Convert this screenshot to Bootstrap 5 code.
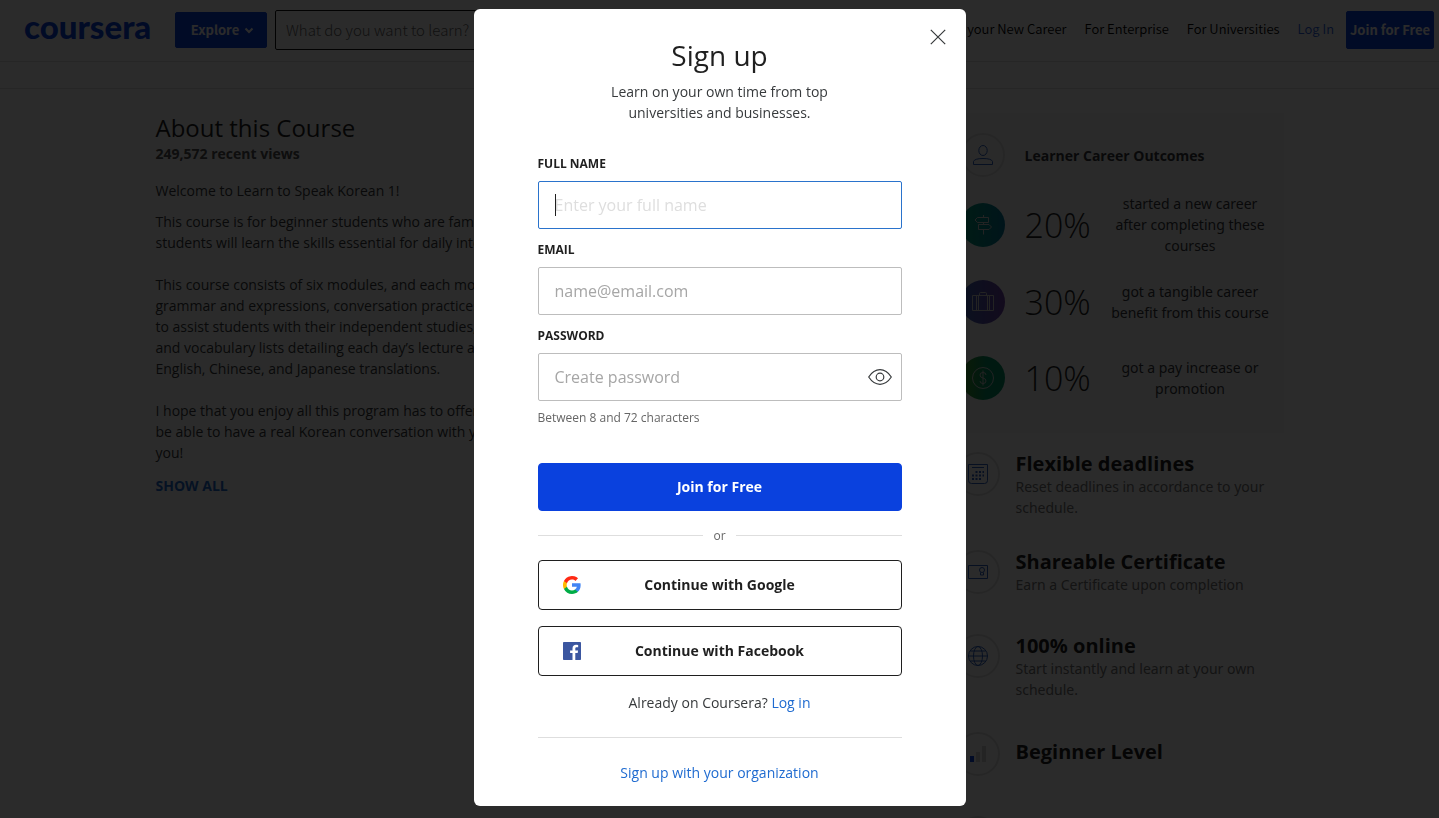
<!DOCTYPE html>
<html lang="en">
<head>
<meta charset="utf-8">
<meta name="viewport" content="width=device-width, initial-scale=1">
<title>Sign up | Coursera</title>
<link href="https://cdn.jsdelivr.net/npm/bootstrap@5.3.0/dist/css/bootstrap.min.css" rel="stylesheet">
<style>
  :root { --brand: #0a41de; --link: #1f6bd0; --ink: #1f1f1f; }
  body { font-family: "Open Sans", "Noto Sans", sans-serif; font-size: 14px; line-height: 21px; color: #373a3c; overflow: hidden; height: 100vh; }
  a { text-decoration: none; color: var(--link); }

  /* site header */
  .site-header { height: 62px; padding: 0 5px 2px 24px; border-bottom: 1px solid #e1e1e1; font-family: "Noto Sans CJK SC", sans-serif; }
  .brand-name { font-family: Lato, sans-serif; font-weight: 900; font-size: 33px; line-height: 36px; color: var(--brand); width: 151px; }
  .btn-explore { width: 92px; height: 36px; }
  .btn-brand { --bs-btn-bg: var(--brand); --bs-btn-border-color: var(--brand); --bs-btn-color: #fff; --bs-btn-hover-bg: #0837bd; --bs-btn-hover-color: #fff; --bs-btn-border-radius: 2px; --bs-btn-padding-x: 0; --bs-btn-padding-y: 0; font-weight: 700; font-size: 13px; white-space: nowrap; }
  .btn-join-top { width: 88px; height: 38px; margin-left: 12px; }
  .search-box { width: 360px; height: 40px; border: 1px solid #111; border-radius: 2px; font-size: 15px; font-weight: 300; padding: 0 10px; }
  .search-box::placeholder { color: #666; opacity: 1; }
  .top-links { font-size: 13px; font-weight: 350; gap: 18px; padding-bottom: 2px; white-space: nowrap; }
  .top-links a { color: #000; }
  .top-links .login-link { color: #2a5fe0; }
  .sub-bar { height: 27px; border-bottom: 1px solid #e1e1e1; }

  /* course page */
  .course { max-width: 1128px; margin: 24px auto 0; }
  .course-text { max-width: 720px; }
  .course-text h2 { font-size: 24px; line-height: 30px; color: var(--ink); }
  .views { font-weight: 700; color: #525252; margin-bottom: 16px; }
  .course-text .about { margin-bottom: 21px; }
  .course-text .about-first { margin-top: 10px; }
  .course-text .about-last { margin-bottom: 12px; }
  .show-all { font-weight: 700; }
  .course-side { width: 340px; font-family: "Noto Sans", "Open Sans", sans-serif; }
  .outcomes { background: #f9f9f9; border: 1px solid #f5f5f5; padding: 19px 13px 24px 16px; gap: 16px; }
  .ring { width: 44px; height: 44px; border-radius: 50%; border: 2px solid #e1e1e1; flex: none; display: grid; place-items: center; }
  .ring.filled { border: 0; }
  .teal { background: linear-gradient(90deg, #00a37a, #00789c); }
  .violet { background: linear-gradient(90deg, #3a62b8, #7040a8); }
  .green { background: linear-gradient(90deg, #389a30 10%, #009468 60%); }
  .outcome { min-height: 60px; gap: 20px; }
  .percent, .course-side strong, .course-side h3 { font-family: "Open Sans", sans-serif; }
  .percent { font-size: 34px; line-height: 44px; font-weight: 300; color: var(--ink); width: 66px; flex: none; }
  .outcome-text { flex: 1; margin: 0 -4px; text-align: center; }
  .features { padding: 19px 0 0 12px; gap: 32px; }
  .feature { min-height: 52px; gap: 16px; color: #757575; }
  .feature h3 { font-size: 20px; line-height: 24px; font-weight: 700; color: var(--ink); margin: 0; }
  .single { padding-top: 8px; }

  /* sign-up dialog */
  .modal-backdrop.show { opacity: .83; }
  .signup { --bs-modal-width: 492px; --bs-modal-border-radius: 6px; }
  .signup .modal-dialog { margin: 9px auto; }
  .signup .modal-content { border: 0; padding: 28px 64px 23px; }
  .signup h1 { font-size: 28px; line-height: 36px; font-weight: 400; color: var(--ink); }
  .intro { max-width: 240px; }
  .signup label { display: block; font-size: 12px; line-height: 18px; font-weight: 700; color: var(--ink); text-transform: uppercase; margin-bottom: 8px; }
  .signup .form-control { height: 48px; padding: 0 16px; font-size: 16px; border: 1px solid #bdbdbd; border-radius: 2px; }
  .signup .form-control::placeholder { color: #a6a6a6; opacity: 1; }
  .signup .form-control:focus { border-color: #2a73cc; box-shadow: none; caret-color: transparent; }
  .signup .form-control:focus::placeholder { color: #dedede; }
  .text-cursor { display: none; position: absolute; left: 17px; bottom: 13px; width: 1px; height: 22px; background: var(--ink); }
  .form-control:focus:placeholder-shown + .text-cursor { display: block; }
  .signup .form-control:focus:not(:placeholder-shown) { caret-color: var(--ink); }
  .note { font-size: 12px; line-height: 18px; color: #666; }
  .signup-form { margin-top: 32px; gap: 12px; }
  .btn-tall { height: 48px; font-size: 14px; padding-bottom: 2px; --bs-btn-border-radius: 4px; }
  .btn-submit { margin-top: 36px; }
  .divider { gap: 10px; margin: 16px 0 15px; }
  .signup hr { border-color: #dedede; opacity: 1; }
  .divider hr { margin: 0 0 1px; }
  .btn-social { height: 50px; font-size: 14px; font-weight: 700; padding: 0 0 2px; border: 1px solid var(--ink); color: var(--ink); --bs-btn-border-radius: 4px; }
  .btn-social svg { position: absolute; left: 24px; top: 15px; }
  .rule { margin: 24px 0; }
  .btn-x { position: absolute; top: 16px; right: 16px; width: 24px; height: 24px; }
  .btn-eye { position: absolute; right: 10px; bottom: 12px; width: 24px; height: 24px; }
</style>
</head>
<body>
<header class="site-header d-flex align-items-center">
  <a href="#" class="brand-name flex-shrink-0 pb-2">coursera</a>
  <button type="button" class="btn btn-brand btn-explore flex-shrink-0 d-flex align-items-center justify-content-center gap-1 ps-1">Explore
    <svg width="12" height="12" viewBox="0 0 12 12" fill="none" stroke="#fff" stroke-width="2"><path d="M2.500 4.500L6 8l3.500-3.500"/></svg>
  </button>
  <input type="search" class="search-box ms-2 bg-white" placeholder="What do you want to learn?" aria-label="Search courses">
  <nav class="top-links d-flex ms-auto align-items-center" aria-label="Main">
    <a href="#">Find your New Career</a>
    <a href="#">For Enterprise</a>
    <a href="#">For Universities</a>
    <a href="#" class="login-link">Log In</a>
  </nav>
  <button type="button" class="btn btn-brand btn-join-top flex-shrink-0">Join for Free</button>
</header>
<div class="sub-bar"></div>

<main class="course d-flex justify-content-between">
  <section class="course-text">
    <h2 class="fw-normal mb-0">About this Course</h2>
    <p class="views">249,572 recent views</p>
    <p class="mb-0">Welcome to Learn to Speak Korean 1!</p>
    <p class="about about-first">This course is for beginner students who are familiar;<br>students will learn the skills essential for daily into</p>
    <p class="about">This course consists of six modules, and each module:<br>grammar and expressions, conversation practices,<br>to assist students with their independent studies,<br>and vocabulary lists detailing each day’s lecture all in<br>English, Chinese, and Japanese translations.</p>
    <p class="about about-last">I hope that you enjoy all this program has to offer, and<br>be able to have a real Korean conversation with you,<br>you!</p>
    <a href="#" class="show-all">SHOW ALL</a>
  </section>

  <aside class="course-side flex-shrink-0">
    <div class="outcomes d-flex flex-column">
      <div class="d-flex align-items-center gap-3">
        <span class="ring"><svg width="22" height="22" viewBox="0 0 22 22" fill="none" stroke="#2a5fc0"><ellipse cx="11" cy="6.500" rx="4.200" ry="5"/><path d="M1.500 20.500v-3q1-3 9.500-3t9.500 3v3z"/></svg></span>
        <strong class="ms-1">Learner Career Outcomes</strong>
      </div>
      <div class="outcome d-flex align-items-center">
        <span class="ring filled teal"><svg width="22" height="22" viewBox="0 0 22 22" fill="none" stroke="#ccc"><path d="M11.500 1v2M11.500 8.500v2M11.500 15.500v5M5.500 3.500h11v5h-11L3 6zM6.500 10.500h10.500l2.500 2.500-2.500 2.500H6.500z"/></svg></span>
        <span class="percent">20%</span>
        <span class="outcome-text">started a new career after completing these courses</span>
      </div>
      <div class="outcome d-flex align-items-center">
        <span class="ring filled violet"><svg width="24" height="22" viewBox="0 0 24 22" fill="none" stroke="#ccc"><path d="M1.500 4.500h21v15h-21zM5.500 4.500v15M7.500 4.500v15M16.500 4.500v15M18.500 4.500v15M8.500 4.500v-2q0-1 1-1h5q1 0 1 1v2"/></svg></span>
        <span class="percent">30%</span>
        <span class="outcome-text">got a tangible career benefit from this course</span>
      </div>
      <div class="outcome d-flex align-items-center">
        <span class="ring filled green"><svg width="24" height="24" viewBox="0 0 24 24" fill="none" stroke="#ccc"><circle cx="12" cy="12" r="10.500"/><path d="M12 4.500v15M15 9q0-2.500-3-2.500T9 9t3 3 3 3-3 2.500T9 15"/></svg></span>
        <span class="percent">10%</span>
        <span class="outcome-text">got a pay increase or promotion</span>
      </div>
    </div>

    <div class="features d-flex flex-column">
      <div class="feature d-flex">
        <span class="ring"><svg width="20" height="20" viewBox="0 0 20 20" fill="none" stroke="#2a5fc0"><path d="M.5.5h19v16q0 3-3 3h-13q-3 0-3-3zM4 3.500h12"/><path stroke-width="2" stroke-dasharray="2 1.500" d="M7.500 8H16M4 11.500h12M4 15h9"/></svg></span>
        <div><h3>Flexible deadlines</h3>Reset deadlines in accordance to your schedule.</div>
      </div>
      <div class="feature d-flex">
        <span class="ring"><svg width="20" height="20" viewBox="0 0 20 20" fill="none" stroke="#2a5fc0"><path d="M.5 3.500h19v13H.5z"/><circle cx="14" cy="8" r="2.500"/><path d="M12.500 10.500v2.500h3v-2.500"/></svg></span>
        <div><h3>Shareable Certificate</h3>Earn a Certificate upon completion</div>
      </div>
      <div class="feature d-flex">
        <span class="ring"><svg width="20" height="20" viewBox="0 0 20 20" fill="none" stroke="#2a5fc0"><circle cx="10" cy="10" r="9.500"/><ellipse cx="10" cy="10" rx="4.500" ry="9.500"/><path d="M.5 10h19M2.500 5h15M2.500 15h15"/></svg></span>
        <div><h3>100% online</h3>Start instantly and learn at your own schedule.</div>
      </div>
      <div class="feature d-flex">
        <span class="ring"><svg width="20" height="20" viewBox="0 0 20 20" fill="#d5d5d5"><path fill="#0a41de" d="M2 12h4v6H2z"/><path d="M8 8h4v10H8zM14 2h4v16h-4z"/></svg></span>
        <div class="single"><h3>Beginner Level</h3></div>
      </div>
      <div class="feature d-flex"><span class="ring"></span></div>
    </div>
  </aside>
</main>

<div class="modal-backdrop show"></div>
<div class="modal signup show d-block" role="dialog" aria-modal="true" aria-labelledby="signup-title">
  <div class="modal-dialog">
    <div class="modal-content">
      <button type="button" class="btn-x btn p-0 border-0 d-flex align-items-center justify-content-center" aria-label="Close">
        <svg width="16" height="16" viewBox="0 0 16 16" stroke="#373a3c" stroke-width="1.200"><path d="M.8.8l14.400 14.400M15.200.8L.8 15.200"/></svg>
      </button>
      <h1 id="signup-title" class="text-center mb-2">Sign up</h1>
      <p class="intro text-center mx-auto mb-0">Learn on your own time from top universities and businesses.</p>

      <form class="signup-form d-flex flex-column">
        <div class="position-relative">
          <label for="fullname">Full name</label>
          <input id="fullname" type="text" class="form-control" placeholder="Enter your full name" autofocus>
          <span class="text-cursor"></span>
        </div>
        <div>
          <label for="email">Email</label>
          <input id="email" type="email" class="form-control" placeholder="name@email.com">
        </div>
        <div>
          <div class="position-relative">
            <label for="password">Password</label>
            <input id="password" type="password" class="form-control" placeholder="Create password">
            <button type="button" class="btn-eye btn p-0 border-0 d-flex align-items-center" aria-label="Show password">
              <svg width="24" height="24" viewBox="0 0 24 24" fill="none" stroke="#373a3c" stroke-width="1.200"><path d="M.7 12Q5.500 4.700 12 4.700T23.300 12Q18.500 19.300 12 19.300T.7 12z"/><circle cx="12" cy="12" r="3.800"/></svg>
            </button>
          </div>
          <div class="note mt-2">Between 8 and 72 characters</div>
          <button type="submit" class="btn btn-brand btn-tall btn-submit w-100">Join for Free</button>
        </div>
      </form>

      <div class="divider note d-flex align-items-center"><hr class="flex-fill">or<hr class="flex-fill"></div>

      <div class="d-grid gap-3">
        <button type="button" class="btn btn-social position-relative">
          <svg width="18" height="18" viewBox="0 0 18 18"><path fill="#4285f4" d="M17.640 9.200c0-.64-.06-1.250-.16-1.840H9v3.480h4.840a4.140 4.140 0 0 1-1.800 2.720v2.260h2.920c1.700-1.570 2.680-3.880 2.680-6.620z"/><path fill="#00ac47" d="M9 18c2.430 0 4.470-.8 5.960-2.180l-2.920-2.260c-.8.54-1.840.86-3.040.86-2.340 0-4.330-1.580-5.040-3.710H.96v2.330A9 9 0 0 0 9 18z"/><path fill="#ffba00" d="M3.960 10.710a5.400 5.400 0 0 1 0-3.420V4.960H.96a9 9 0 0 0 0 8.080z"/><path fill="#ff2a14" d="M9 3.580c1.320 0 2.510.45 3.440 1.350l2.580-2.580A9 9 0 0 0 .96 4.960l3 2.330C4.670 5.160 6.660 3.580 9 3.580z"/></svg>
          Continue with Google
        </button>
        <button type="button" class="btn btn-social position-relative">
          <svg width="18" height="18" viewBox="0 0 18 18"><rect width="18" height="18" rx=".8" fill="#3b56a0"/><path fill="#fff" d="M12.300 18v-6.900h2.400l.35-2.700H12.300V6.700c0-.8.25-1.350 1.400-1.350h1.450V2.900a20 20 0 0 0-2.100-.1c-2.100 0-3.550 1.300-3.550 3.600v2H7.100v2.700h2.400V18z"/></svg>
          Continue with Facebook
        </button>
      </div>

      <p class="text-center mt-3 mb-0">Already on Coursera? <a href="#">Log in</a></p>
      <hr class="rule">
      <a href="#" class="text-center">Sign up with your organization</a>
    </div>
  </div>
</div>
<script src="https://cdn.jsdelivr.net/npm/bootstrap@5.3.0/dist/js/bootstrap.bundle.min.js"></script>
</body>
</html>
